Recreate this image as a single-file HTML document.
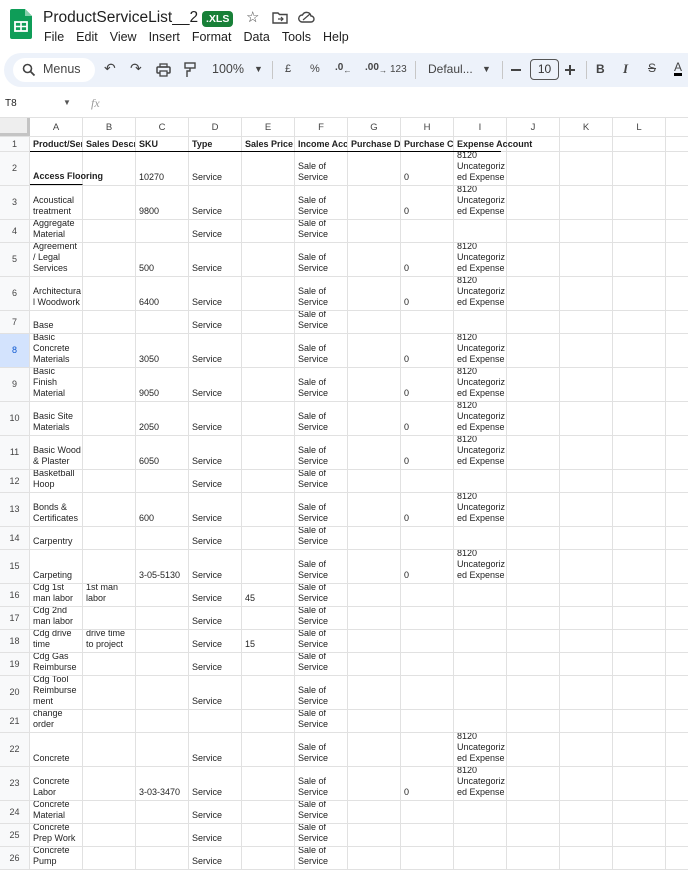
<!DOCTYPE html>
<html><head><meta charset="utf-8"><style>
*{box-sizing:border-box;margin:0;padding:0}
body{width:688px;height:872px;overflow:hidden;background:#fff;font-family:"Liberation Sans",Arial,sans-serif;position:relative;color:#1f1f1f}
.abs{position:absolute}
.title{left:43px;top:9px;font-size:15.5px;color:#1f1f1f}
.xls{left:202px;top:11px;background:#188038;color:#fff;font-size:10.5px;font-weight:bold;padding:2px 4px;border-radius:4px}
.menu{top:30px;left:44px;font-size:12.5px;color:#1f1f1f}
.menu span{margin-right:12px}
.tb{left:4px;top:53px;width:700px;height:34px;background:#edf2fa;border-radius:17px}
.tb .it{position:absolute;top:10px;font-size:12px;color:#444}
.search{position:absolute;left:9px;top:5px;width:82px;height:24px;background:#fff;border-radius:12px}
.fb{left:0;top:95px;width:688px;height:20px;font-size:11px}
#g{position:absolute;left:0;top:117px;width:720px;font-size:9px;line-height:11px}
.r{display:flex;border-bottom:1px solid #e1e1e1;width:720px}
.c{width:53px;flex:none;border-right:1px solid #e1e1e1;padding:0 1px 2px 3px;white-space:nowrap;overflow:hidden;display:flex;align-items:flex-end}
.h{width:30px;flex:none;border-right:1px solid #e1e1e1;background:#f8f9fa;color:#444;display:flex;align-items:center;justify-content:center}
.ch .c{justify-content:center;align-items:center;color:#444;font-size:9.5px;padding:0}
.ch{background:#fff}
.r1 .c{font-weight:bold;padding-bottom:1px}
.sel{background:#d3e3fd;color:#0b57d0}
.t{height:34px}.d{height:23px}
</style></head><body>
<svg class="abs" style="left:10px;top:9px" width="22" height="30" viewBox="0 0 22 30"><path d="M2 0h13l7 7v21a2 2 0 0 1-2 2H2a2 2 0 0 1-2-2V2a2 2 0 0 1 2-2z" fill="#0f9d58"/><path d="M15 0v7h7z" fill="#87ceac"/><rect x="5" y="13" width="12" height="9" fill="none" stroke="#fff" stroke-width="1.8"/><path d="M5 17.5h12M11 13v9" stroke="#fff" stroke-width="1.6"/></svg>
<div class="abs title">ProductServiceList__2</div>
<div class="abs xls">.XLS</div>
<div class="abs" style="left:246px;top:8px;font-size:15px;color:#444">☆</div>
<svg class="abs" style="left:272px;top:11px" width="16" height="13"><path d="M1 2h5l1.5 1.5H15v8.5H1z" fill="none" stroke="#444" stroke-width="1.4"/><path d="M6 8h5M9 6l2 2-2 2" stroke="#444" fill="none" stroke-width="1.2"/></svg>
<svg class="abs" style="left:298px;top:11px" width="17" height="12"><path d="M4 11h9a3 3 0 0 0 0-6 4.5 4.5 0 0 0-8.5-1A3.5 3.5 0 0 0 4 11z" fill="none" stroke="#444" stroke-width="1.4"/><path d="M5 9l7-6" stroke="#444" stroke-width="1.2"/></svg>
<div class="abs menu"><span>File</span><span>Edit</span><span>View</span><span>Insert</span><span>Format</span><span>Data</span><span>Tools</span><span>Help</span></div>
<div class="abs tb">
<div class="search"></div>
<svg style="position:absolute;left:18px;top:10px" width="14" height="14"><circle cx="5.5" cy="5.5" r="4" fill="none" stroke="#444" stroke-width="1.6"/><path d="M8.5 8.5l4 4" stroke="#444" stroke-width="1.8"/></svg>
<span class="it" style="left:39px;font-size:12.5px;top:9px">Menus</span>
<span class="it" style="left:100px;font-size:14px;top:7px">↶</span>
<span class="it" style="left:126px;font-size:14px;top:7px">↷</span>
<svg style="position:absolute;left:152px;top:10px" width="15" height="14"><rect x="1" y="4" width="13" height="6" rx="1" fill="none" stroke="#444" stroke-width="1.5"/><rect x="4" y="1" width="7" height="3" fill="none" stroke="#444" stroke-width="1.3"/><rect x="4" y="8" width="7" height="5" fill="#edf2fa" stroke="#444" stroke-width="1.3"/></svg>
<svg style="position:absolute;left:180px;top:9px" width="12" height="16"><rect x="1" y="1" width="10" height="5" fill="none" stroke="#444" stroke-width="1.4"/><path d="M6 6v3H3v6" fill="none" stroke="#444" stroke-width="1.4"/></svg>
<span class="it" style="left:208px;font-size:12.5px;top:9px">100%</span>
<span class="it" style="left:250px;font-size:9px;top:11px">▼</span>
<div style="position:absolute;left:268px;top:8px;width:1px;height:18px;background:#c7c7c7"></div>
<span class="it" style="left:281px;top:10px;font-size:11px">£</span>
<span class="it" style="left:306px;top:10px;font-size:11px">%</span>
<span class="it" style="left:331px;top:9px;font-size:10px;font-weight:bold">.0<sub>←</sub></span>
<span class="it" style="left:361px;top:9px;font-size:10px;font-weight:bold">.00<sub>→</sub></span>
<span class="it" style="left:386px;top:11px;font-size:10px">123</span>
<div style="position:absolute;left:411px;top:8px;width:1px;height:18px;background:#c7c7c7"></div>
<span class="it" style="left:424px;top:9px;font-size:12px">Defaul...</span>
<span class="it" style="left:478px;top:11px;font-size:9px">▼</span>
<div style="position:absolute;left:498px;top:8px;width:1px;height:18px;background:#c7c7c7"></div>
<div style="position:absolute;left:507px;top:16px;width:10px;height:1.5px;background:#444"></div>
<div style="position:absolute;left:526px;top:6px;width:29px;height:21px;border:1px solid #555;border-radius:4px;font-size:12px;text-align:center;line-height:19px;color:#333">10</div>
<div style="position:absolute;left:561px;top:16px;width:10px;height:1.5px;background:#444"></div>
<div style="position:absolute;left:565px;top:12px;width:1.5px;height:10px;background:#444"></div>
<div style="position:absolute;left:582px;top:8px;width:1px;height:18px;background:#c7c7c7"></div>
<span class="it" style="left:592px;top:9px;font-size:12px;font-weight:bold">B</span>
<span class="it" style="left:619px;top:8px;font-size:13px;font-style:italic;font-family:'Liberation Serif',serif;font-weight:bold">I</span>
<span class="it" style="left:644px;top:8px;font-size:12px;text-decoration:line-through">S</span>
<span class="it" style="left:670px;top:8px;font-size:12px;border-bottom:3px solid #000;line-height:12px">A</span>
</div>
<div class="abs fb"><span style="position:absolute;left:5px;top:3px;font-size:10px">T8</span><span style="position:absolute;left:63px;top:3px;font-size:8px;color:#555">▼</span><span style="position:absolute;left:91px;top:1px;font-size:12px;color:#999;font-style:italic;font-family:'Liberation Serif',serif">fx</span></div>
<div id="g">
<div class="r ch" style="height:20px;border-top:1px solid #e1e1e1"><div class="h" style="background:#eee;border-right:3px solid #c4c4c4;border-bottom:3px solid #c4c4c4"></div><div class="c">A</div><div class="c">B</div><div class="c">C</div><div class="c">D</div><div class="c">E</div><div class="c">F</div><div class="c">G</div><div class="c">H</div><div class="c">I</div><div class="c">J</div><div class="c">K</div><div class="c">L</div><div class="c"></div></div>
<div class="r r1" style="height:15px"><div class="h">1</div><div class="c">Product/Ser</div><div class="c">Sales Descr</div><div class="c">SKU</div><div class="c">Type</div><div class="c">Sales Price .</div><div class="c">Income Acc</div><div class="c">Purchase D</div><div class="c">Purchase C</div><div class="c" style="overflow:visible">Expense Account</div><div class="c"></div><div class="c"></div><div class="c"></div><div class="c"></div></div>
<div class="abs" style="left:30px;top:34px;width:471px;height:1px;background:#000"></div>
<div class="r t"><div class="h">2</div><div class="c" style="overflow:visible;font-weight:bold;border-bottom:1px solid #000">Access Flooring</div><div class="c"></div><div class="c">10270</div><div class="c">Service</div><div class="c"></div><div class="c">Sale of<br>Service</div><div class="c"></div><div class="c">0</div><div class="c">8120<br>Uncategoriz<br>ed Expense</div><div class="c"></div><div class="c"></div><div class="c"></div><div class="c"></div></div>
<div class="r t"><div class="h">3</div><div class="c">Acoustical<br>treatment</div><div class="c"></div><div class="c">9800</div><div class="c">Service</div><div class="c"></div><div class="c">Sale of<br>Service</div><div class="c"></div><div class="c">0</div><div class="c">8120<br>Uncategoriz<br>ed Expense</div><div class="c"></div><div class="c"></div><div class="c"></div><div class="c"></div></div>
<div class="r d"><div class="h">4</div><div class="c">Aggregate<br>Material</div><div class="c"></div><div class="c"></div><div class="c">Service</div><div class="c"></div><div class="c">Sale of<br>Service</div><div class="c"></div><div class="c"></div><div class="c"></div><div class="c"></div><div class="c"></div><div class="c"></div><div class="c"></div></div>
<div class="r t"><div class="h">5</div><div class="c">Agreement<br>/ Legal<br>Services</div><div class="c"></div><div class="c">500</div><div class="c">Service</div><div class="c"></div><div class="c">Sale of<br>Service</div><div class="c"></div><div class="c">0</div><div class="c">8120<br>Uncategoriz<br>ed Expense</div><div class="c"></div><div class="c"></div><div class="c"></div><div class="c"></div></div>
<div class="r t"><div class="h">6</div><div class="c">Architectura<br>l Woodwork</div><div class="c"></div><div class="c">6400</div><div class="c">Service</div><div class="c"></div><div class="c">Sale of<br>Service</div><div class="c"></div><div class="c">0</div><div class="c">8120<br>Uncategoriz<br>ed Expense</div><div class="c"></div><div class="c"></div><div class="c"></div><div class="c"></div></div>
<div class="r d"><div class="h">7</div><div class="c">Base</div><div class="c"></div><div class="c"></div><div class="c">Service</div><div class="c"></div><div class="c">Sale of<br>Service</div><div class="c"></div><div class="c"></div><div class="c"></div><div class="c"></div><div class="c"></div><div class="c"></div><div class="c"></div></div>
<div class="r t"><div class="h sel">8</div><div class="c">Basic<br>Concrete<br>Materials</div><div class="c"></div><div class="c">3050</div><div class="c">Service</div><div class="c"></div><div class="c">Sale of<br>Service</div><div class="c"></div><div class="c">0</div><div class="c">8120<br>Uncategoriz<br>ed Expense</div><div class="c"></div><div class="c"></div><div class="c"></div><div class="c"></div></div>
<div class="r t"><div class="h">9</div><div class="c">Basic<br>Finish<br>Material</div><div class="c"></div><div class="c">9050</div><div class="c">Service</div><div class="c"></div><div class="c">Sale of<br>Service</div><div class="c"></div><div class="c">0</div><div class="c">8120<br>Uncategoriz<br>ed Expense</div><div class="c"></div><div class="c"></div><div class="c"></div><div class="c"></div></div>
<div class="r t"><div class="h">10</div><div class="c">Basic Site<br>Materials</div><div class="c"></div><div class="c">2050</div><div class="c">Service</div><div class="c"></div><div class="c">Sale of<br>Service</div><div class="c"></div><div class="c">0</div><div class="c">8120<br>Uncategoriz<br>ed Expense</div><div class="c"></div><div class="c"></div><div class="c"></div><div class="c"></div></div>
<div class="r t"><div class="h">11</div><div class="c">Basic Wood<br>&amp; Plaster</div><div class="c"></div><div class="c">6050</div><div class="c">Service</div><div class="c"></div><div class="c">Sale of<br>Service</div><div class="c"></div><div class="c">0</div><div class="c">8120<br>Uncategoriz<br>ed Expense</div><div class="c"></div><div class="c"></div><div class="c"></div><div class="c"></div></div>
<div class="r d"><div class="h">12</div><div class="c">Basketball<br>Hoop</div><div class="c"></div><div class="c"></div><div class="c">Service</div><div class="c"></div><div class="c">Sale of<br>Service</div><div class="c"></div><div class="c"></div><div class="c"></div><div class="c"></div><div class="c"></div><div class="c"></div><div class="c"></div></div>
<div class="r t"><div class="h">13</div><div class="c">Bonds &amp;<br>Certificates</div><div class="c"></div><div class="c">600</div><div class="c">Service</div><div class="c"></div><div class="c">Sale of<br>Service</div><div class="c"></div><div class="c">0</div><div class="c">8120<br>Uncategoriz<br>ed Expense</div><div class="c"></div><div class="c"></div><div class="c"></div><div class="c"></div></div>
<div class="r d"><div class="h">14</div><div class="c">Carpentry</div><div class="c"></div><div class="c"></div><div class="c">Service</div><div class="c"></div><div class="c">Sale of<br>Service</div><div class="c"></div><div class="c"></div><div class="c"></div><div class="c"></div><div class="c"></div><div class="c"></div><div class="c"></div></div>
<div class="r t"><div class="h">15</div><div class="c">Carpeting</div><div class="c"></div><div class="c">3-05-5130</div><div class="c">Service</div><div class="c"></div><div class="c">Sale of<br>Service</div><div class="c"></div><div class="c">0</div><div class="c">8120<br>Uncategoriz<br>ed Expense</div><div class="c"></div><div class="c"></div><div class="c"></div><div class="c"></div></div>
<div class="r d"><div class="h">16</div><div class="c">Cdg 1st<br>man labor</div><div class="c">1st man<br>labor</div><div class="c"></div><div class="c">Service</div><div class="c">45</div><div class="c">Sale of<br>Service</div><div class="c"></div><div class="c"></div><div class="c"></div><div class="c"></div><div class="c"></div><div class="c"></div><div class="c"></div></div>
<div class="r d"><div class="h">17</div><div class="c">Cdg 2nd<br>man labor</div><div class="c"></div><div class="c"></div><div class="c">Service</div><div class="c"></div><div class="c">Sale of<br>Service</div><div class="c"></div><div class="c"></div><div class="c"></div><div class="c"></div><div class="c"></div><div class="c"></div><div class="c"></div></div>
<div class="r d"><div class="h">18</div><div class="c">Cdg drive<br>time</div><div class="c">drive time<br>to project</div><div class="c"></div><div class="c">Service</div><div class="c">15</div><div class="c">Sale of<br>Service</div><div class="c"></div><div class="c"></div><div class="c"></div><div class="c"></div><div class="c"></div><div class="c"></div><div class="c"></div></div>
<div class="r d"><div class="h">19</div><div class="c">Cdg Gas<br>Reimburse</div><div class="c"></div><div class="c"></div><div class="c">Service</div><div class="c"></div><div class="c">Sale of<br>Service</div><div class="c"></div><div class="c"></div><div class="c"></div><div class="c"></div><div class="c"></div><div class="c"></div><div class="c"></div></div>
<div class="r t"><div class="h">20</div><div class="c">Cdg Tool<br>Reimburse<br>ment</div><div class="c"></div><div class="c"></div><div class="c">Service</div><div class="c"></div><div class="c">Sale of<br>Service</div><div class="c"></div><div class="c"></div><div class="c"></div><div class="c"></div><div class="c"></div><div class="c"></div><div class="c"></div></div>
<div class="r d"><div class="h">21</div><div class="c">change<br>order</div><div class="c"></div><div class="c"></div><div class="c"></div><div class="c"></div><div class="c">Sale of<br>Service</div><div class="c"></div><div class="c"></div><div class="c"></div><div class="c"></div><div class="c"></div><div class="c"></div><div class="c"></div></div>
<div class="r t"><div class="h">22</div><div class="c">Concrete</div><div class="c"></div><div class="c"></div><div class="c">Service</div><div class="c"></div><div class="c">Sale of<br>Service</div><div class="c"></div><div class="c"></div><div class="c">8120<br>Uncategoriz<br>ed Expense</div><div class="c"></div><div class="c"></div><div class="c"></div><div class="c"></div></div>
<div class="r t"><div class="h">23</div><div class="c">Concrete<br>Labor</div><div class="c"></div><div class="c">3-03-3470</div><div class="c">Service</div><div class="c"></div><div class="c">Sale of<br>Service</div><div class="c"></div><div class="c">0</div><div class="c">8120<br>Uncategoriz<br>ed Expense</div><div class="c"></div><div class="c"></div><div class="c"></div><div class="c"></div></div>
<div class="r d"><div class="h">24</div><div class="c">Concrete<br>Material</div><div class="c"></div><div class="c"></div><div class="c">Service</div><div class="c"></div><div class="c">Sale of<br>Service</div><div class="c"></div><div class="c"></div><div class="c"></div><div class="c"></div><div class="c"></div><div class="c"></div><div class="c"></div></div>
<div class="r d"><div class="h">25</div><div class="c">Concrete<br>Prep Work</div><div class="c"></div><div class="c"></div><div class="c">Service</div><div class="c"></div><div class="c">Sale of<br>Service</div><div class="c"></div><div class="c"></div><div class="c"></div><div class="c"></div><div class="c"></div><div class="c"></div><div class="c"></div></div>
<div class="r d"><div class="h">26</div><div class="c">Concrete<br>Pump</div><div class="c"></div><div class="c"></div><div class="c">Service</div><div class="c"></div><div class="c">Sale of<br>Service</div><div class="c"></div><div class="c"></div><div class="c"></div><div class="c"></div><div class="c"></div><div class="c"></div><div class="c"></div></div>
</div>
</body></html>
